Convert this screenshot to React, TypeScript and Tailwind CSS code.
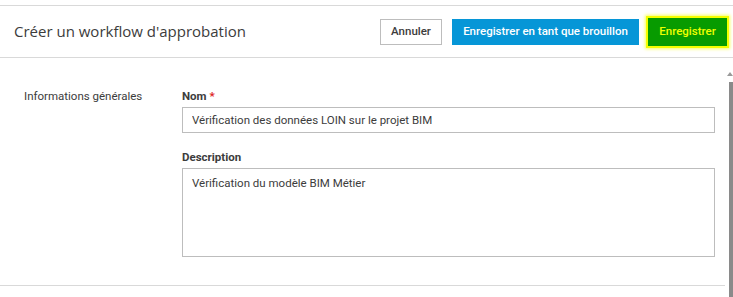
import { useState } from 'react';

export default function App() {
  const [nom, setNom] = useState('Vérification des données LOIN sur le projet BIM');
  const [description, setDescription] = useState('Vérification du modèle BIM Métier');

  return (
    <div className="w-[733px] h-[297px] bg-white overflow-hidden relative font-['Roboto',sans-serif] text-[#3c3c3c]">
      {/* En-tête */}
      <div className="mt-[5px] border-t border-[#d9d9d9]">
        <div className="h-[52px] flex items-center justify-between pl-[14px] pr-[6px] border-b border-[#d9d9d9]">
          <h1 className="font-['Open_Sans',sans-serif] text-[15px] text-[#3c3c3c]">Créer un workflow d'approbation</h1>
          <div className="flex items-center">
            <button className="h-[26px] w-[62px] border border-[#bdbdbd] bg-white text-[11.5px] font-medium text-[#3c3c3c]">
              Annuler
            </button>
            <button className="ml-[10px] h-[26px] w-[187px] bg-[#0696d7] text-[11.5px] font-medium text-white">
              Enregistrer en tant que brouillon
            </button>
            <button className="ml-[9px] h-[28px] w-[79px] bg-[#079b00] text-[11.5px] font-medium text-[#eeff00] shadow-[0_0_0_2px_#f4ff00,0_0_3px_3px_#f8ff60]">
              Enregistrer
            </button>
          </div>
        </div>
      </div>

      {/* Contenu */}
      <div className="flex pr-[8px]">
        <div className="flex-1 border-b border-[#d9d9d9] mt-[11px] pb-[28px] flex">
          <div className="w-[182px] pl-[24px] pt-[20px] text-[11.5px] leading-[14px]">Informations générales</div>
          <div className="flex-1 pr-[10px] pt-[20px]">
            <label className="block text-[11.5px] font-bold leading-[14px]">
              Nom <span className="text-[#dd2222]">*</span>
            </label>
            <input
              value={nom}
              onChange={(e) => setNom(e.target.value)}
              className="mt-[4px] w-full h-[26px] border border-[#bdbdbd] px-[9px] text-[11.5px] text-[#3c3c3c] outline-none"
            />
            <label className="block mt-[17px] text-[11.5px] font-bold leading-[14px]">Description</label>
            <textarea
              value={description}
              onChange={(e) => setDescription(e.target.value)}
              className="mt-[4px] w-full h-[89px] border border-[#bdbdbd] px-[9px] py-[6px] text-[11.5px] text-[#3c3c3c] outline-none resize-none block"
            />
          </div>
        </div>
      </div>

      {/* Barre de défilement */}
      <div className="absolute right-0 top-[70px] bottom-0 w-[6px]">
        <div className="mx-auto w-0 h-0 border-x-[3px] border-x-transparent border-b-[4px] border-b-[#9a9a9a] mt-[2px]" />
        <div className="mt-[6px] w-[4px] ml-[2px] h-full bg-[#8a8a8a]" />
      </div>
    </div>
  );
}
